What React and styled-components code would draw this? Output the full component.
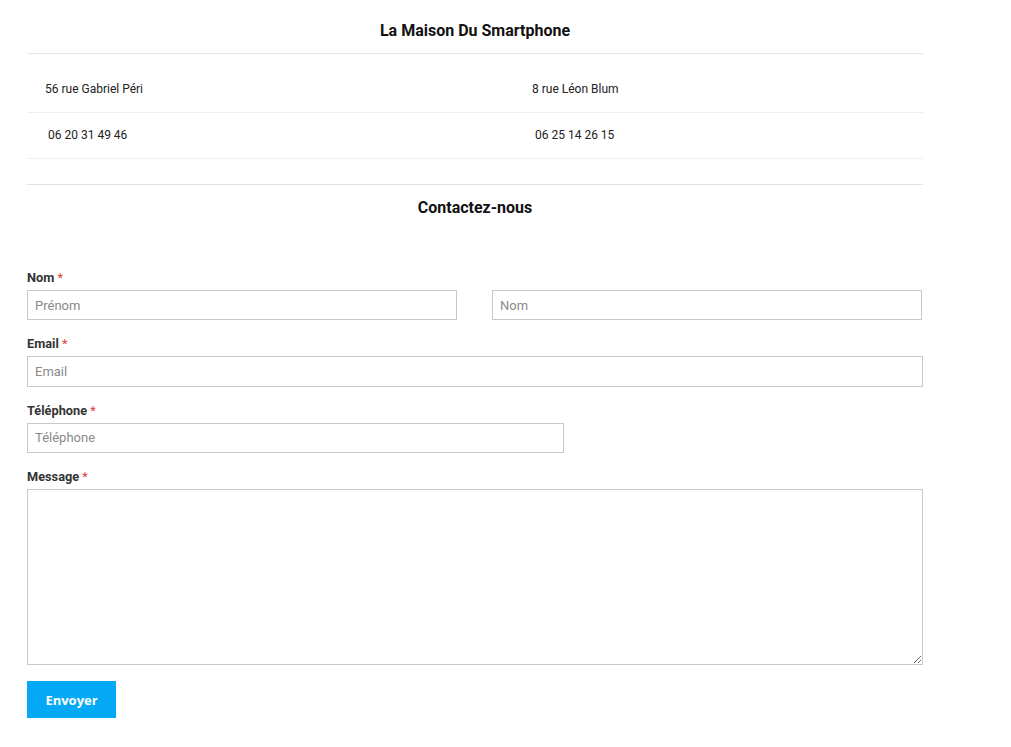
import styled, { createGlobalStyle } from "styled-components";

const GlobalStyle = createGlobalStyle`
  body {
    margin: 0;
    background: #fff;
    font-family: Roboto, "Liberation Sans", sans-serif;
    color: #222;
  }
  * { box-sizing: border-box; }
`;

const App = () => {
  return (
    <>
      <GlobalStyle />
      <Page>
        <Shops>
          <ShopTitle>La Maison Du Smartphone</ShopTitle>
          <ShopRow $first>
            <ShopCell>56 rue Gabriel Péri</ShopCell>
            <ShopCell>8 rue Léon Blum</ShopCell>
          </ShopRow>
          <ShopRow>
            <ShopCell $shift>06 20 31 49 46</ShopCell>
            <ShopCell $shift>06 25 14 26 15</ShopCell>
          </ShopRow>
        </Shops>

        <Divider />
        <SectionTitle>Contactez-nous</SectionTitle>

        <Form onSubmit={(e) => e.preventDefault()}>
          <Field>
            <Label>
              Nom <Req>*</Req>
            </Label>
            <NameRow>
              <Input placeholder="Prénom" />
              <Input placeholder="Nom" />
            </NameRow>
          </Field>
          <Field>
            <Label>
              Email <Req>*</Req>
            </Label>
            <Input $h={30.5} placeholder="Email" />
          </Field>
          <Field>
            <Label>
              Téléphone <Req>*</Req>
            </Label>
            <Input $h={30.5} $w="537px" placeholder="Téléphone" />
          </Field>
          <Field>
            <Label>
              Message <Req>*</Req>
            </Label>
            <TextArea />
          </Field>
          <Submit type="submit">Envoyer</Submit>
        </Form>
      </Page>
    </>
  );
};

const Page = styled.div`
  width: 896px;
  margin-left: 27px;
`;

const Shops = styled.div`
  display: flex;
  flex-direction: column;
`;

const ShopTitle = styled.h2`
  margin: 0;
  padding: 19px 0 10px;
  font-size: 16px;
  line-height: 24px;
  font-weight: 700;
  text-align: center;
  color: #111;
  border-bottom: 1px solid #e6e6e6;
`;

const ShopRow = styled.div`
  display: grid;
  grid-template-columns: 487px 1fr;
  padding: ${(p) => (p.$first ? "26px 0 14px" : "13px 0 14px")};
  padding-left: 18px;
  border-bottom: 1px solid #efefef;
`;

const ShopCell = styled.div`
  font-size: 12px;
  line-height: 18px;
  color: #222;
  padding-left: ${(p) => (p.$shift ? "3px" : "0")};
`;

const Divider = styled.hr`
  margin: 25px 0 0;
  border: 0;
  border-top: 1px solid #e3e3e3;
`;

const SectionTitle = styled.h3`
  margin: 0;
  padding-top: 12px;
  font-size: 16px;
  line-height: 22px;
  font-weight: 700;
  text-align: center;
  color: #111;
`;

const Form = styled.form`
  display: flex;
  flex-direction: column;
  gap: 16px;
  margin-top: 51px;
`;

const Field = styled.div`
  display: flex;
  flex-direction: column;
  gap: 4px;
`;

const Label = styled.label`
  font-size: 12.75px;
  line-height: 16px;
  font-weight: 700;
  color: #333;
`;

const Req = styled.span`
  color: #e53935;
  font-weight: 400;
`;

const NameRow = styled.div`
  display: grid;
  grid-template-columns: 430px 430px;
  column-gap: 35px;
`;

const Input = styled.input`
  width: ${(p) => p.$w || "100%"};
  height: ${(p) => p.$h || 30}px;
  padding: 0 7px;
  border: 1px solid #c8c8c8;
  border-radius: 0;
  font-family: Roboto, "Liberation Sans", sans-serif;
  font-size: 13px;
  color: #333;
  outline: none;

  &::placeholder {
    color: #8a8a8a;
  }
`;

const TextArea = styled.textarea`
  width: 100%;
  height: 176px;
  border: 1px solid #c8c8c8;
  border-radius: 0;
  padding: 8px;
  font-family: Roboto, "Liberation Sans", sans-serif;
  font-size: 13px;
  outline: none;
  display: block;
`;

const Submit = styled.button`
  align-self: flex-start;
  width: 89px;
  height: 37px;
  border: 0;
  border-radius: 0;
  background: #03a9f4;
  color: #fff;
  font-family: "Open Sans", "Liberation Sans", sans-serif;
  font-size: 13px;
  font-weight: 700;
  cursor: pointer;
`;

export default App;
